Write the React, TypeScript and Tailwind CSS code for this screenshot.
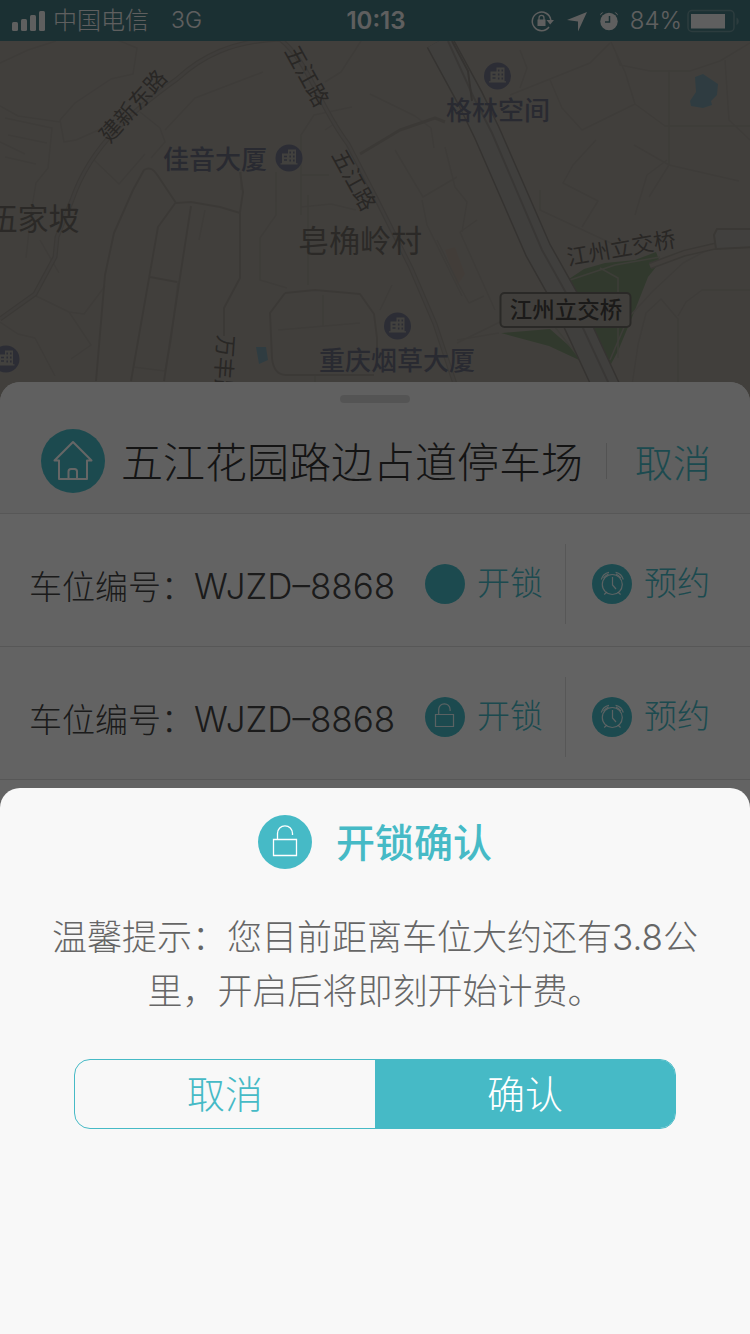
import React from "react";

const SANS = "font-['Inter','Noto_Sans_CJK_SC',sans-serif]";

function UnlockIcon({ className }: { className: string }) {
  return (
    <svg viewBox="0 0 54 54" className={className} fill="none" aria-hidden="true">
      <circle cx="27" cy="27" r="27" fill="#46bac6" />
      <path d="M15.500 24.500h23v16h-23z M19.500 24.500v-6c0-4.200 3.300-7.700 7.500-7.700s7.500 3.300 7.500 7.700v1.500" stroke="#fff" strokeWidth="1.300" />
    </svg>
  );
}

function SmallUnlockIcon({ className }: { className: string }) {
  return (
    <svg viewBox="0 0 40 40" className={className} fill="none" aria-hidden="true">
      <circle cx="20" cy="20" r="20" fill="#46bac6" />
      <path d="M10.500 17.500h18v12h-18z M13.700 17.500v-5c0-3.300 2.500-5.700 5.700-5.700s5.700 2.400 5.700 5.700v1.500" stroke="#fff" strokeOpacity=".85" strokeWidth="1.200" />
    </svg>
  );
}

function PlainIcon({ className }: { className: string }) {
  return (
    <svg viewBox="0 0 40 40" className={className} aria-hidden="true">
      <circle cx="20" cy="20" r="20" fill="#46bac6" />
    </svg>
  );
}

function ClockIcon({ className }: { className: string }) {
  return (
    <svg viewBox="0 0 40 40" className={className} fill="none" aria-hidden="true">
      <circle cx="20" cy="20" r="20" fill="#46bac6" />
      <g stroke="#fff" strokeOpacity=".85" strokeWidth="1.200">
        <circle cx="20.300" cy="20.500" r="10" />
        <path d="M20.500 13v8l3.500 4 M15 28l-2.800 2.500 M25.800 28l2.800 2.500 M9.300 15.500c1-3.800 3.800-6.500 7.700-7.200 M31.300 15.500c-1-3.800-3.800-6.500-7.700-7.200" />
        <path d="M11.500 14c1.500-2 3-3.200 5-4 M29 14c-1.500-2-3-3.200-5-4" />
      </g>
    </svg>
  );
}

function HomeIcon({ className }: { className: string }) {
  return (
    <svg viewBox="0 0 64 64" className={className} fill="none" aria-hidden="true">
      <circle cx="32" cy="32" r="32" fill="#46bac6" />
      <path d="M18 31.500h-4.500L32 13l18.500 18.500H46V50H18z M27.500 50v-7.500c0-1.500 1-2.500 2.500-2.500h3.500c1.500 0 2.500 1 2.500 2.500V50 M46 31.500h4.500" stroke="#fff" strokeWidth="2" strokeLinejoin="round" />
    </svg>
  );
}

function StatusBar() {
  return (
    <div className="flex h-[41px] items-center bg-[#44787f] pl-3 pr-2.5 text-[23px] text-[#eee]">
      <div className="flex flex-1 items-center">
        <svg viewBox="0 0 33 20" className="mr-2 h-5 w-[33px]" fill="#eee" aria-hidden="true">
          <rect x="0" y="11" width="6" height="9" rx="1.500" />
          <rect x="9" y="8" width="6" height="12" rx="1.500" />
          <rect x="18" y="4" width="6" height="16" rx="1.500" />
          <rect x="27" y="0" width="6" height="20" rx="1.500" />
        </svg>
        <span className="text-[24px] font-light">中国电信</span>
        <span className="ml-[22px] font-light">3G</span>
      </div>
      <span className="text-[24px] font-semibold">10:13</span>
      <div className="flex flex-1 items-center justify-end">
        <svg viewBox="0 0 88 24" className="h-6 w-[88px]" fill="none" aria-hidden="true">
          <path d="M19 18A9.300 9.300 0 1 1 20.800 11" stroke="#eee" strokeWidth="1.500" />
          <path d="M16.500 11h7.500l-3.800 4.500z" fill="#eee" />
          <rect x="7.500" y="10.500" width="8" height="6.500" fill="#eee" />
          <path d="M9 11V9c0-3.500 5-3.500 5 0v2" stroke="#eee" strokeWidth="1.300" />
          <path d="M57 3L48 22.500V12.500L37 11z" fill="#eee" />
          <circle cx="79" cy="12.500" r="8.700" fill="#eee" />
          <path d="M70 6.500c.3-2 1.500-3 3.500-3.300z M88 6.500c-.3-2-1.500-3-3.500-3.300z" fill="#eee" />
          <path d="M79.500 7v6H75" stroke="#44787f" strokeWidth="1.500" />
        </svg>
        <span className="ml-3 text-[24px] font-light">84%</span>
        <svg viewBox="0 0 54 24" className="ml-1 h-6 w-[54px]" fill="none" aria-hidden="true">
          <rect x="2" y="1.500" width="46" height="21" rx="4" stroke="#6f969b" strokeWidth="1.500" />
          <rect x="5" y="5" width="34" height="14.500" fill="#eee" />
          <path d="M50.500 8.500c3 1.500 3 6 0 7.500z" fill="#6f969b" />
        </svg>
      </div>
    </div>
  );
}

function Poi({ x, y }: { x: number; y: number }) {
  return (
    <g transform={`translate(${x} ${y})`}>
      <circle r="13.500" fill="#6e7184" />
      <path d="M-8.500 6.500h17V5.300H7V-8.500h-8v4h-6v9.800h-1.500z" fill="#a6a29c" />
      <path d="M1.200-6.500v10M4.800-6.500v10" stroke="#6e7184" strokeWidth="1.600" strokeDasharray="2 2" />
      <path d="M-5-1.500h3M-5 2h3" stroke="#6e7184" strokeWidth="1.300" />
    </g>
  );
}

function CityMap() {
  return (
    <svg
      viewBox="0 41 750 361"
      preserveAspectRatio="xMidYMin slice"
      className="block h-[361px] w-full bg-[#a39e97]"
      role="img"
      aria-label="地图"
    >
      <path d="M695 77l8-3 15 10-1 11-6 6 1 4-9 3-12-2-1-5 6-9z M256 347h10l2 13-9 4z" fill="#7697a2" />
      <path d="M569 279l15-10 21-6 30-3 21-8 4 10-12 15-15 38-15 36-8 15z M502 333l48-4 42 37-43-20-48-13z" fill="#7b9070" />
      <path d="M570 280l45-15 45-8M600 268l18 10 0 80M551 322l30 38" fill="none" stroke="#99998c" strokeWidth="1.500" />
      <path d="M445 250l10-3 10 27-8 12z" fill="#a69a90" />

      <g fill="none" stroke="#9b968f" strokeWidth="1.500" strokeLinejoin="round">
        <path d="M0 63l28-13 28-9M0 106l18 10 42 6M60 120l15-17 36-24 22-5 4-26-22-9M60 120l4 22 12-2 54-24M5 118l47 10-4 40-12 15-5 30-5 45M8 135l39 8M5 157l31 7M0 142l25 12" />
        <path d="M140 112l20 16 5 14-14 16M92 158l27 26 26-30M165 130l30-32 68-26M276 202v-30M301 215v-80l13-20 38-8M301 175h28M301 207l30-3 25 6M325 130l12-8M325 82l16-10 20-31" />
        <path d="M241 190v-18M276 190v25l-16 23v42l27 8M308 195v90M323 295v32M278 330l82-7M315 374v20M205 210l-6 30M133 367l32 4 6-30 7-60" />
        <path d="M0 322l18 12 17 4 20 38M34 295l35 17 15 2 21-28M69 312l22 33-20 14M40 240l19 33" />
        <path d="M370 94l45 22 16 12 3 20M445 147l10 40 12 15-5 30M395 150l28 47 34-20M510 95l80-32 20-20M550 80l12 28 20 22 53-26-10-32-14-30M615 50l5 15 30 6h40l30-10 30-18M669 70v95l-20 32M635 104l30 22h85M725 60l4 60 21 20M596 140l-23 25-10 18 35 18-16 26M634 145l35 20 70 16M540 190v20l75 35M635 215l12-40 20-15M520 50l7 18-7 20" />
        <path d="M380 310l12-25M422 200l5 25 35 71M477 220l-17 12 35 78M437 240l22 45 10 18 15-7" />
        <path d="M457 343l45-22 8-14M457 340l42-7M610 360l18-42 25-27 30-28 32-17M632 385l6-40 8-32 15-14 17 20v74M678 316l8-14 16-12h48" />
      </g>
      <g fill="none" stroke="#958f88" strokeWidth="2" strokeLinejoin="round">
        <path d="M96 381l9-106 9-42 19-43 11-20c6-4 10 0 14 6l18 27 15-1 29 5 20 6v65l-16 30v28M240 172l3 20-3 20M176 202l-18 25-27 154M191 206l-17 110-10 65M150 277l27 5" />
        <path d="M285 293l30-3 45 4 14 20 3 24v30M285 293l-15 20 2 45c1 10 5 17 14 17h88" />
        <path d="M360 154l40-24 35-12 10 4" strokeWidth="3" />
      </g>

      <g fill="none">
        <path d="M72 200c20-58 65-92 105-121 25-23 55-38 103-40 30 24 38 66 68 105l28 54 35 70 24 56 20 60M72 200l-15 37-2 20-20 37-35 25" stroke="#948f88" strokeWidth="5" />
        <path d="M72 200c20-58 65-92 105-121 25-23 55-38 103-40 30 24 38 66 68 105l28 54 35 70 24 56 20 60M72 200l-15 37-2 20-20 37-35 25" stroke="#9f9a93" strokeWidth="2.500" />
        <path d="M439 41l31 57 17 35 51 117 28 50 52 112" stroke="#85807a" strokeWidth="28" />
        <path d="M439 41l31 57 17 35 51 117 28 50 52 112" stroke="#a09e9a" strokeWidth="25" />
        <path d="M448 41l26 57 18 35 50 117 28 50 52 112" stroke="#8e8b86" strokeWidth="2" />
        <path d="M452 41l16 30 4 30" stroke="#85807a" strokeWidth="2" />
        <path d="M650 266l35-13 35-8" stroke="#918c84" strokeWidth="7" />
        <path d="M650 266l35-13 35-8" stroke="#a29c94" strokeWidth="4" />
        <path d="M755 229h-38l-3 6 2 14 39-2" fill="#a4a19c" stroke="#918c84" strokeWidth="2" />
      </g>

      <g fontFamily="Inter, 'Noto Sans CJK SC', sans-serif" textAnchor="middle" fill="#66625d">
        <g fontSize="22">
          <text transform="translate(133 106) rotate(-48)" y="8">建新东路</text>
          <text transform="translate(307 76) rotate(61)" y="8">五江路</text>
          <text transform="translate(354 180) rotate(61)" y="8">五江路</text>
          <text transform="translate(621 248) rotate(-10)" y="8">江州立交桥</text>
          <text transform="translate(224 368) rotate(94)" y="8">万丰路</text>
        </g>
        <g fontSize="31" fill="#6c6862">
          <text x="33" y="230">伍家坡</text>
          <text x="360" y="252">皂桷岭村</text>
        </g>
        <g fontSize="26" fontWeight="500" fill="#676a7b">
          <text x="215" y="169">佳音大厦</text>
          <text x="498" y="120">格林空间</text>
          <text x="397" y="370">重庆烟草大厦</text>
        </g>
        <rect x="500.500" y="293" width="130" height="34" rx="4" fill="#a29e96" stroke="#6a6761" strokeWidth="2" />
        <text x="566" y="318" fontSize="22.500" fontWeight="500" fill="#45433f">江州立交桥</text>
      </g>
      <Poi x={497.500} y={76} />
      <Poi x={289} y={158} />
      <Poi x={397.500} y={326} />
      <Poi x={6} y={359} />
    </svg>
  );
}

function SpaceRow({ locked }: { locked: boolean }) {
  return (
    <li className="flex h-[133px] items-center border-b border-[#dadada] pl-[29px] pr-10 pt-2 text-[33px] font-light">
      <span className="flex flex-1 items-baseline whitespace-nowrap pt-1 text-[#444]">
        车位编号：
        <span className="text-[35px]">WJZD–8868</span>
      </span>
      <button type="button" className="flex items-center gap-3 whitespace-nowrap text-[#46bac6]">
        {locked ? <SmallUnlockIcon className="size-10" /> : <PlainIcon className="size-10" />}
        开锁
      </button>
      <span className="ml-[22px] mr-[26px] h-20 w-px bg-[#dadada]" />
      <button type="button" className="flex items-center gap-3 whitespace-nowrap text-[#46bac6]">
        <ClockIcon className="size-10" />
        预约
      </button>
    </li>
  );
}

export default function App() {
  return (
    <div className={`relative min-h-screen overflow-hidden bg-[#f8f8f8] ${SANS}`} lang="zh-CN">
      <StatusBar />
      <CityMap />

      <section className="relative -mt-5 rounded-t-[20px] bg-[#f8f8f8]">
        <header className="rounded-t-[20px] border-b border-[#dadada] bg-[#efefef] pb-5 pt-[13px]">
          <div className="mx-auto h-2 w-[70px] rounded-full bg-[#d3d3d3]" />
          <div className="mt-[26px] flex h-16 items-center pl-[41px] pr-[39px]">
            <HomeIcon className="size-16 shrink-0" />
            <h1 className="ml-4 flex-1 whitespace-nowrap pt-1 text-[42px] font-light leading-none text-[#333]">
              五江花园路边占道停车场
            </h1>
            <span className="mr-7 h-9 w-px bg-[#d0d0d0]" />
            <button type="button" className="whitespace-nowrap pt-1 text-[38px] font-light leading-none text-[#46bac6]">
              取消
            </button>
          </div>
        </header>
        <ul>
          <SpaceRow locked={false} />
          <SpaceRow locked />
        </ul>
      </section>

      <div className="fixed inset-0 flex flex-col justify-end bg-black/60">
        <div
          role="dialog"
          aria-modal="true"
          aria-labelledby="unlock-title"
          className="rounded-t-[20px] bg-[#f8f8f8] pb-[205px] pt-[27px] text-center"
        >
          <div className="flex h-[54px] items-center justify-center gap-6">
            <UnlockIcon className="size-[54px]" />
            <h2 id="unlock-title" className="text-[39px] font-medium leading-none text-[#46bac6]">
              开锁确认
            </h2>
          </div>
          <p className="mx-auto mt-[41px] max-w-[650px] text-[35px] font-light leading-[54px] text-[#666]">
            温馨提示：您目前距离车位大约还有3.8公里，开启后将即刻开始计费。
          </p>
          <div className="mx-[74px] mt-[41px] flex h-[70px] overflow-hidden rounded-[16px] border border-[#46bac6] text-[38px] font-light">
            <button type="button" className="flex-1 text-[#46bac6]">取消</button>
            <button type="button" className="flex-1 bg-[#46bac6] text-white">确认</button>
          </div>
        </div>
      </div>
    </div>
  );
}
